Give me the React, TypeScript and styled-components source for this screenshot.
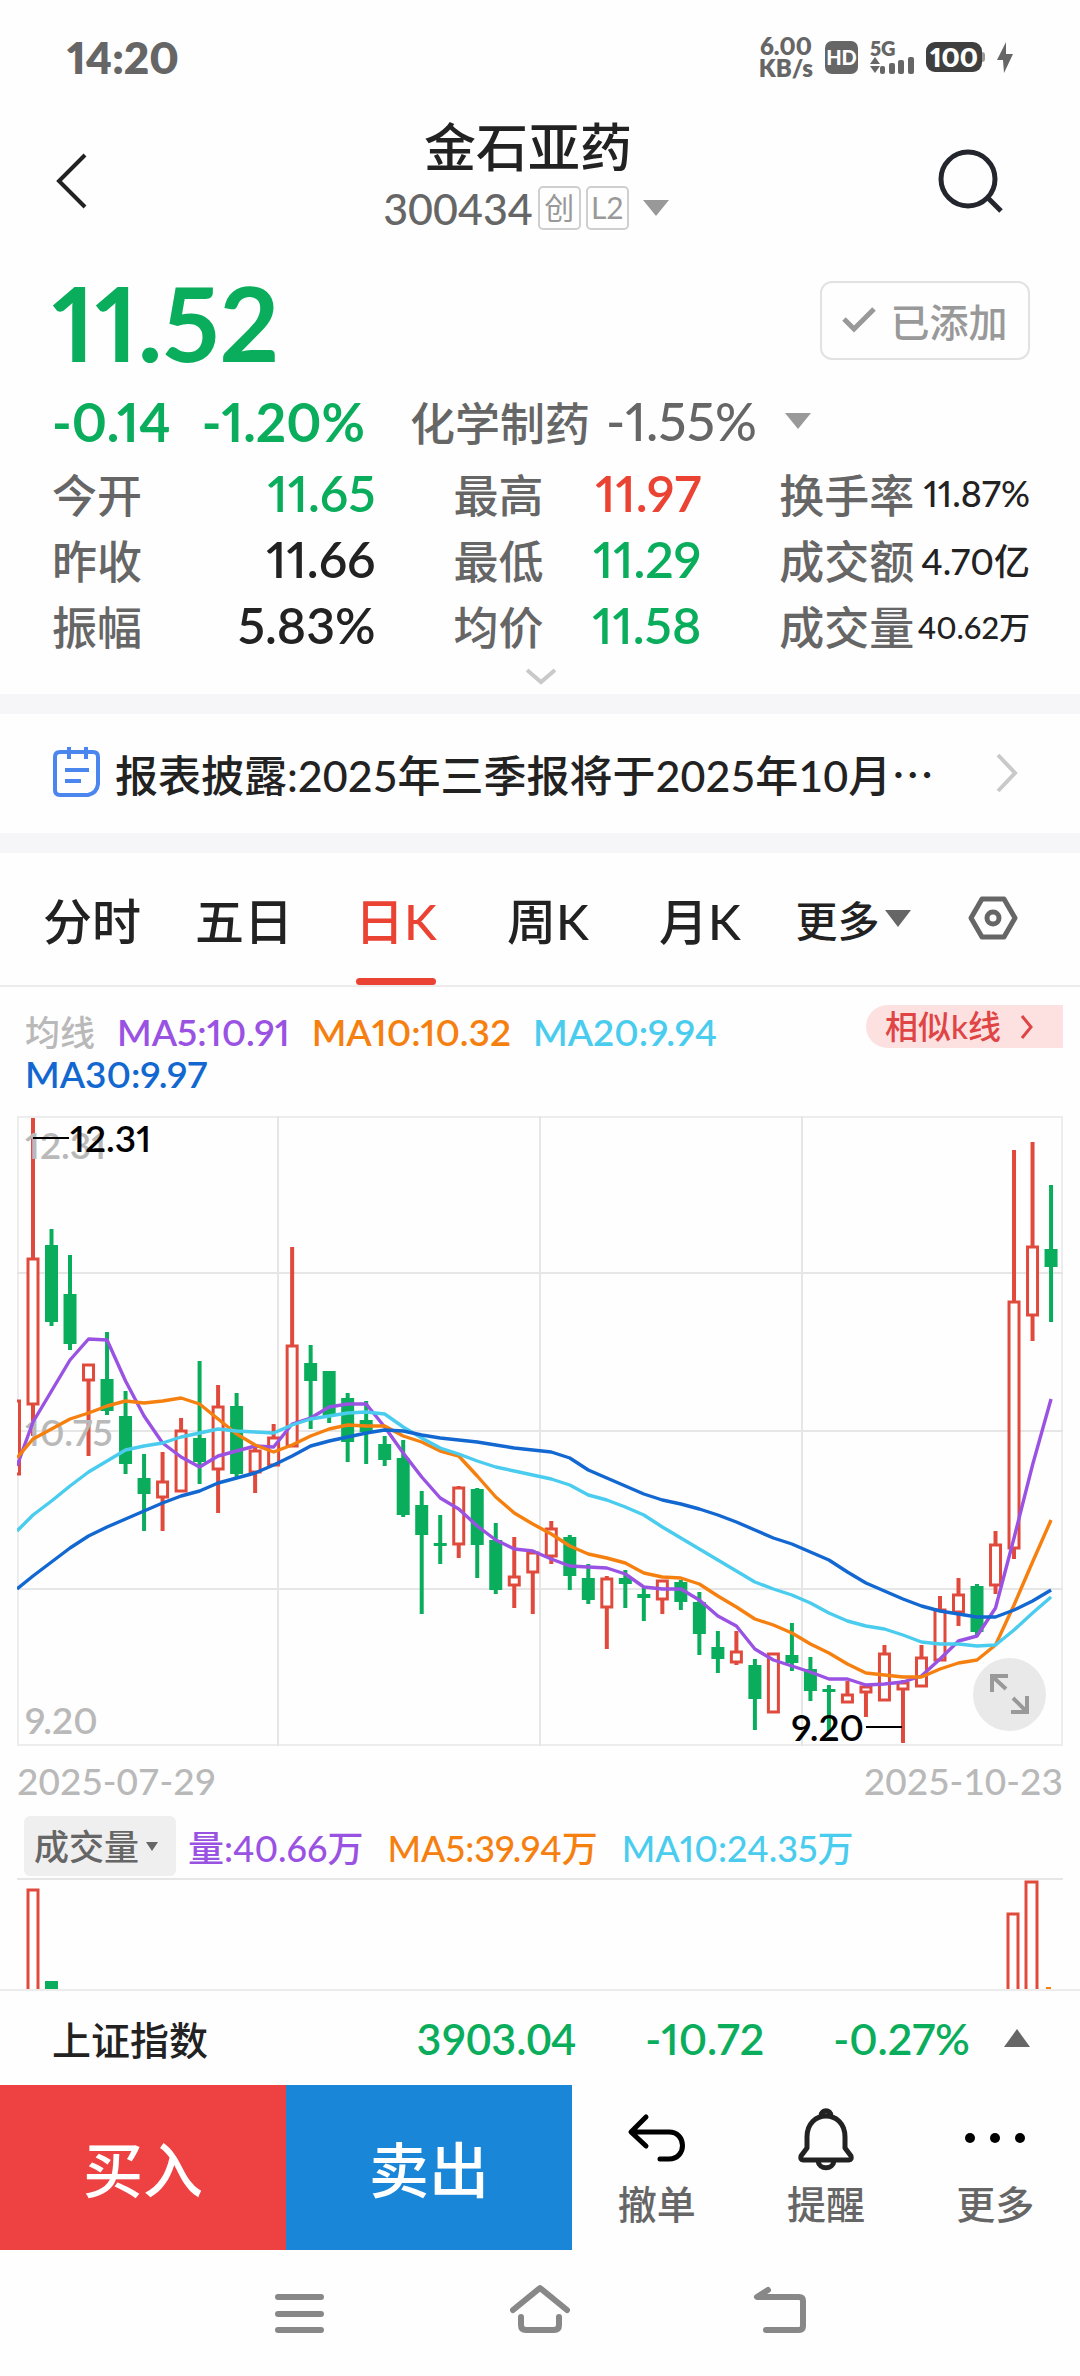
import React from 'react';
import styled, { createGlobalStyle } from 'styled-components';

const color = {
  up: '#eb4333',
  down: '#0aad5c',
  ink: '#222222',
  soft: '#666666',
  mute: '#999999',
  faint: '#b9b9b9',
  line: '#ececec',
  band: '#f6f6f8',
  ma5: '#9a52e3',
  ma10: '#f5800f',
  ma20: '#4accee',
  ma30: '#1268d0',
};

const GlobalStyle = createGlobalStyle`
  * { box-sizing: border-box; }
  body {
    margin: 0;
    background: #fefefe;
    color: ${color.ink};
    font-family: Lato, "Noto Sans CJK SC", sans-serif;
    font-weight: 500;
    font-variant-numeric: proportional-nums;
  }
  button, select { font: inherit; font-variant-numeric: inherit; color: inherit; background: none; border: 0; padding: 0; margin: 0; cursor: pointer; }
  h1, h2, p, dl, dd, dt { margin: 0; font-weight: inherit; }
  svg { display: block; flex: none; }
`;

/* ---------- status bar ---------- */
const StatusBar = styled.header`
  display: flex;
  align-items: center;
  justify-content: space-between;
  height: 112px;
  padding: 2px 67px 0;
  color: ${color.soft};
  font-weight: 800;
`;
const Clock = styled.time`
  font-size: 44px;
`;
const StatusIcons = styled.div`
  display: flex;
  align-items: center;
  gap: 12px;
`;
const NetSpeed = styled.div`
  font-size: 24px;
  line-height: 22px;
  text-align: center;
`;
const HdBadge = styled.span`
  width: 33px;
  border-radius: 7px;
  background: ${color.soft};
  color: #fff;
  font-size: 20px;
  font-weight: 900;
  line-height: 33px;
  text-align: center;
`;
const Signal = styled.div`
  font-size: 20px;
  line-height: 16px;
`;
const Battery = styled.div`
  display: flex;
  align-items: center;
  &::after {
    content: '';
    width: 3px;
    height: 10px;
    border-radius: 0 3px 3px 0;
    background: ${color.mute};
  }
`;
const BatteryLevel = styled.span`
  width: 56px;
  border-radius: 9px;
  background: #3f3f3f;
  color: #fff;
  font-size: 27px;
  line-height: 30px;
  text-align: center;
`;

/* ---------- title ---------- */
const TitleBar = styled.div`
  display: flex;
  height: 138px;
`;
const BarButton = styled.button<{ $width: number }>`
  display: flex;
  align-items: center;
  width: ${p => p.$width}px;
  height: 138px;
`;
const TitleBlock = styled.div`
  flex: 1;
  text-align: center;
`;
const StockName = styled.h1`
  font-size: 52px;
  line-height: 70px;
`;
const CodeButton = styled.button`
  display: inline-flex;
  align-items: center;
  height: 52px;
  padding-right: 4px;
  color: ${color.soft};
  font-size: 43px;
  font-variant-numeric: tabular-nums;
`;
const Tag = styled.span`
  min-width: 43px;
  height: 44px;
  margin-left: 5px;
  border: 2px solid #cfcfcf;
  border-radius: 5px;
  color: ${color.mute};
  font-size: 30px;
  font-weight: 400;
  line-height: 38px;
  text-align: center;
`;

/* ---------- quote ---------- */
const Quote = styled.section`
  padding: 22px 50px 0 52px;
`;
const PriceRow = styled.div`
  display: flex;
  align-items: center;
  justify-content: space-between;
  height: 100px;
`;
const Price = styled.p`
  color: ${color.down};
  font-size: 104px;
  font-weight: 700;
  line-height: 100px;
`;
const AddedButton = styled.button`
  display: flex;
  align-items: center;
  justify-content: center;
  gap: 14px;
  width: 210px;
  height: 79px;
  margin-bottom: 4px;
  border: 2px solid #e2e2e2;
  border-radius: 12px;
  color: ${color.mute};
  font-size: 39px;
`;
const ChangeRow = styled.div`
  display: flex;
  align-items: center;
  height: 66px;
  margin: 16px 0 6px;
  font-size: 53px;
`;
const Change = styled.span`
  margin-right: 31px;
  color: ${color.down};
  font-weight: 700;
`;
const SectorButton = styled.button`
  display: flex;
  align-items: center;
  gap: 16px;
  margin-left: 14px;
  color: ${color.soft};
  font-size: 45px;
`;
const SectorChange = styled.span`
  margin-right: 12px;
  font-size: 52px;
`;
const Stats = styled.dl`
  display: grid;
  grid-template-columns: 324fr 248fr 251fr;
  column-gap: 78px;
`;
const Stat = styled.div`
  display: flex;
  align-items: center;
  justify-content: space-between;
  height: 66px;
  white-space: nowrap;
`;
const StatLabel = styled.dt`
  color: ${color.soft};
  font-size: 45px;
`;
const StatValue = styled.dd<{ $tone: string; $size: number }>`
  color: ${p => p.$tone};
  font-size: ${p => p.$size}px;
  font-weight: ${p => (p.$size > 40 ? 600 : 500)};
`;
const ExpandButton = styled.button`
  display: flex;
  justify-content: center;
  width: 100%;
  height: 36px;
  padding-top: 10px;
`;

/* ---------- news ---------- */
const Band = styled.div`
  height: 20px;
  background: ${color.band};
`;
const News = styled.a`
  display: flex;
  align-items: center;
  height: 119px;
  padding: 0 62px 2px 53px;
  color: inherit;
  font-size: 43px;
  text-decoration: none;
`;
const NewsText = styled.span`
  flex: 1;
  min-width: 0;
  padding-left: 14px;
  overflow: hidden;
  white-space: nowrap;
  font-variant-numeric: tabular-nums;
`;

/* ---------- tabs ---------- */
const Tabs = styled.nav`
  display: grid;
  grid-template-columns: repeat(5, 152fr) 154fr 126fr;
  height: 134px;
  padding: 0 24px 0 16px;
  border-bottom: 2px solid ${color.line};
`;
const Tab = styled.button<{ $active?: boolean }>`
  display: flex;
  align-items: center;
  justify-content: center;
  position: relative;
  padding-bottom: 2px;
  color: ${p => (p.$active ? color.up : color.ink)};
  font-size: 49px;
  &::after {
    content: '';
    display: ${p => (p.$active ? 'block' : 'none')};
    position: absolute;
    bottom: 0;
    left: 50%;
    width: 80px;
    height: 7px;
    margin-left: -40px;
    border-radius: 4px;
    background: ${color.up};
  }
`;
const MoreTab = styled(Tab)`
  gap: 5px;
  font-size: 42px;
`;

/* ---------- chart ---------- */
const LegendRow = styled.div`
  display: flex;
  align-items: flex-start;
  padding: 18px 17px 21px 25px;
`;
const Legend = styled.div`
  display: flex;
  flex: 1;
  flex-wrap: wrap;
  column-gap: 22px;
  padding-top: 6px;
  font-size: 37px;
  line-height: 42px;
`;
const LegendItem = styled.span<{ $tone: string }>`
  color: ${p => p.$tone};
`;
const AverageItem = styled(LegendItem)`
  font-weight: 600;
`;
const LegendTitle = styled(LegendItem)`
  font-size: 35px;
`;
const SimilarButton = styled.button`
  display: flex;
  align-items: center;
  gap: 20px;
  height: 43px;
  padding: 0 30px 0 19px;
  border-radius: 22px 0 0 22px;
  background: #fde1e1;
  color: #e04545;
  font-size: 33px;
  line-height: 43px;
`;
const ChartBox = styled.div`
  position: relative;
  margin: 0 17px;
  & > svg { width: 100%; height: auto; }
`;
const FullScreen = styled.button`
  position: absolute;
  right: 17px;
  bottom: 15px;
  width: 73px;
  height: 73px;
  border-radius: 50%;
  background: rgba(228, 228, 228, 0.8);
`;
const DateRow = styled.div`
  display: flex;
  justify-content: space-between;
  padding: 0 17px;
  color: ${color.faint};
  font-size: 37px;
  font-variant-numeric: tabular-nums;
  line-height: 70px;
`;
const VolumeRow = styled.div`
  display: flex;
  align-items: center;
  column-gap: 24px;
  height: 62px;
  padding: 0 0 2px 24px;
  font-size: 36px;
`;
const PickerBox = styled.label`
  display: flex;
  align-items: center;
  width: 152px;
  height: 60px;
  padding-left: 10px;
  margin-right: -12px;
  border-radius: 6px;
  background: #efefef;
  color: ${color.soft};
  font-size: 35px;
`;
const Picker = styled.select`
  width: 112px;
  height: 60px;
  appearance: none;
  outline: none;
`;

/* ---------- index strip ---------- */
const IndexStrip = styled.section`
  display: flex;
  align-items: center;
  height: 96px;
  padding: 0 50px 0 52px;
  border-top: 2px solid ${color.line};
  color: ${color.down};
  font-size: 43px;
`;
const IndexName = styled.h2`
  flex: 1;
  color: ${color.ink};
  font-size: 39px;
`;
const IndexValue = styled.span<{ $tabular?: boolean }>`
  margin-left: 69px;
  font-weight: 600;
  font-variant-numeric: ${p => (p.$tabular ? 'tabular-nums' : 'inherit')};
`;
const IndexToggle = styled.button`
  margin-left: 34px;
`;

/* ---------- trade bar ---------- */
const TradeBar = styled.div`
  display: grid;
  grid-template-columns: 286fr 286fr 508fr;
  height: 165px;
`;
const TradeButton = styled.button<{ $bg: string }>`
  padding-bottom: 3px;
  background: ${p => p.$bg};
  color: #fff;
  font-size: 60px;
`;
const Tools = styled.div`
  display: grid;
  grid-template-columns: repeat(3, 1fr);
`;
const Tool = styled.button`
  display: flex;
  flex-direction: column;
  align-items: center;
  padding-top: 23px;
  color: ${color.soft};
  font-size: 39px;
  line-height: 64px;
`;
const SystemNav = styled.nav`
  display: flex;
  justify-content: center;
  gap: 178px;
  height: 126px;
`;
const NavButton = styled.button`
  width: 62px;
  height: 116px;
`;

/* ---------- glyphs ---------- */
type TriangleProps = { width: number; height: number; fill: string; up?: boolean };
const Triangle = ({ width, height, fill, up }: TriangleProps) => (
  <svg width={width} height={height} viewBox="0 0 10 10" preserveAspectRatio="none">
    <path d={up ? 'M5 0L10 10H0Z' : 'M0 0H10L5 10Z'} fill={fill} />
  </svg>
);
type ChevronProps = { width: number; height: number; stroke: string; weight: number; points: string };
const Chevron = ({ width, height, stroke, weight, points }: ChevronProps) => (
  <svg width={width} height={height} viewBox={`0 0 ${width} ${height}`}>
    <polyline points={points} fill="none" stroke={stroke} strokeWidth={weight} />
  </svg>
);

/* ---------- chart data (plot units, 1046 x 630) ---------- */
type Candle = [up: 0 | 1, top: number, bottom: number, high: number, low: number];
const candles: Candle[] = [
  [1, 284, 359, 284, 359], [1, 142, 289, 2, 320], [0, 129, 206, 113, 210], [0, 178, 228, 139, 234],
  [1, 248, 265, 248, 340], [0, 263, 295, 216, 299], [0, 300, 348, 275, 358], [0, 362, 378, 338, 415],
  [1, 365, 382, 336, 415], [1, 314, 376, 302, 376], [0, 322, 346, 245, 368], [1, 290, 354, 269, 397],
  [0, 290, 358, 277, 362], [1, 334, 357, 330, 377], [1, 321, 350, 308, 350], [1, 229, 331, 131, 331],
  [0, 247, 265, 229, 313], [0, 255, 300, 255, 307], [0, 282, 326, 277, 346], [0, 304, 316, 285, 348],
  [0, 328, 344, 320, 350], [0, 342, 399, 324, 401], [0, 389, 419, 375, 498], [0, 427, 430, 399, 448],
  [1, 371, 429, 370, 442], [0, 373, 429, 372, 462], [0, 424, 474, 407, 478], [1, 460, 470, 421, 492],
  [1, 436, 457, 434, 498], [1, 412, 441, 405, 448], [0, 421, 460, 419, 474], [0, 462, 484, 448, 488],
  [1, 462, 492, 460, 533], [0, 462, 468, 454, 492], [0, 478, 482, 472, 505], [1, 464, 484, 464, 498],
  [0, 466, 486, 464, 494], [0, 486, 518, 476, 539], [0, 531, 543, 515, 557], [1, 535, 547, 515, 549],
  [0, 549, 583, 543, 614], [1, 537, 597, 537, 597], [0, 539, 547, 507, 555], [0, 553, 575, 541, 585],
  [0, 573, 576, 569, 617], [1, 578, 587, 565, 587], [1, 570, 577, 570, 601], [1, 537, 585, 529, 585],
  [1, 566, 574, 564, 627], [1, 541, 571, 529, 571], [1, 493, 545, 480, 545], [1, 478, 497, 462, 510],
  [0, 470, 516, 468, 519], [1, 428, 470, 415, 478], [1, 185, 433, 34, 443], [1, 130, 200, 26, 225],
  [0, 133, 151, 69, 206],
];
const averages: { tone: string; values: number[] }[] = [
  { tone: color.ma5, values: [350, 306, 275, 244, 223, 224, 265, 300, 327, 341, 351, 340, 335, 330, 331, 308, 302, 291, 288, 288, 311, 337, 361, 382, 393, 410, 424, 433, 435, 443, 450, 451, 452, 458, 471, 473, 473, 484, 500, 510, 533, 544, 550, 556, 563, 563, 569, 568, 566, 560, 543, 525, 520, 492, 422, 349, 283] },
  { tone: color.ma10, values: [342, 323, 313, 303, 297, 290, 285, 287, 285, 282, 288, 303, 318, 329, 336, 329, 320, 313, 309, 310, 310, 320, 326, 335, 340, 360, 381, 397, 408, 418, 430, 438, 442, 447, 457, 461, 462, 468, 480, 491, 503, 509, 517, 528, 537, 548, 557, 559, 561, 561, 553, 547, 544, 529, 489, 446, 404] },
  { tone: color.ma20, values: [415, 399, 385, 370, 356, 345, 334, 330, 327, 321, 317, 313, 315, 316, 317, 309, 303, 300, 297, 296, 298, 311, 322, 332, 338, 345, 351, 355, 359, 363, 369, 379, 384, 391, 399, 411, 422, 433, 444, 455, 466, 473, 479, 487, 497, 505, 510, 513, 519, 526, 528, 528, 530, 529, 514, 497, 481] },
  { tone: color.ma30, values: [473, 460, 446, 432, 420, 411, 403, 395, 387, 380, 375, 367, 362, 357, 349, 340, 330, 325, 321, 317, 314, 315, 319, 322, 324, 326, 329, 332, 334, 336, 342, 354, 362, 370, 378, 384, 388, 393, 399, 406, 414, 422, 428, 436, 444, 456, 467, 475, 483, 490, 495, 498, 501, 501, 494, 485, 474] },
];
const slot = (i: number) => 16 + (i - 1) * 18.51;

const CandleChart = () => (
  <svg viewBox="0 0 1046 630" role="img" aria-label="日K线图">
    <defs><clipPath id="plot"><rect width="1046" height="630" /></clipPath></defs>
    <g stroke="#e6e6e6" strokeWidth="2" fill="none">
      <rect x="1" y="1" width="1044" height="628" stroke="#ededed" />
      <path d="M0 157H1046M0 315H1046M0 473H1046M261 0V630M523 0V630M785 0V630" />
    </g>
    <g clipPath="url(#plot)">
      {candles.map(([up, top, bottom, high, low], i) => {
        const x = slot(i);
        const tone = up ? '#e04a3c' : color.down;
        return (
          <g key={i} stroke={tone}>
            {high < top && <path d={`M${x} ${high}V${top}`} strokeWidth="4" />}
            {low > bottom && <path d={`M${x} ${bottom}V${low}`} strokeWidth="4" />}
            {up
              ? <rect x={x - 5} y={top + 1} width="10" height={Math.max(bottom - top - 2, 2)} fill="#fefefe" strokeWidth="3" />
              : <rect x={x - 6.5} y={top} width="13" height={bottom - top} fill={tone} stroke="none" />}
          </g>
        );
      })}
    </g>
    <g fill={color.faint} fontSize="37" fontWeight="600">
      <text x="8" y="43">12.31</text>
      <text x="8" y="330">10.75</text>
      <text x="8" y="618">9.20</text>
    </g>
    <g clipPath="url(#plot)" fill="none" strokeWidth="3.4" strokeLinejoin="round">
      {averages.map(({ tone, values }) => (
        <polyline key={tone} stroke={tone} points={values.map((v, i) => `${i ? slot(i) : 0},${v}`).join(' ')} />
      ))}
    </g>
    <path d="M16 22H52M849 611H885" stroke="#000" strokeWidth="2" />
    <g fill="#000" fontSize="37" fontWeight="600">
      <text x="53" y="36">12.31</text>
      <text x="847" y="625" textAnchor="end">9.20</text>
    </g>
  </svg>
);

const VolumeChart = () => (
  <svg viewBox="0 0 1046 111" role="img" aria-label="成交量图">
    <path d="M0 1H1046" stroke="#e6e6e6" strokeWidth="2" />
    <g fill="none" stroke="#e04a3c" strokeWidth="3">
      <path d="M11 111V12H21V111M991 111V36H1001V111M1009 111V4H1020V111" />
    </g>
    <path d="M28 103H41V111H28Z" fill={color.down} />
    <path d="M1029 109H1034V111H1029Z" fill={color.ma10} />
  </svg>
);

const stats = [
  { label: '今开', value: '11.65', tone: color.down, size: 50 },
  { label: '最高', value: '11.97', tone: color.up, size: 50 },
  { label: '换手率', value: '11.87%', tone: color.ink, size: 36 },
  { label: '昨收', value: '11.66', tone: color.ink, size: 50 },
  { label: '最低', value: '11.29', tone: color.down, size: 50 },
  { label: '成交额', value: '4.70亿', tone: color.ink, size: 36 },
  { label: '振幅', value: '5.83%', tone: color.ink, size: 50 },
  { label: '均价', value: '11.58', tone: color.down, size: 50 },
  { label: '成交量', value: '40.62万', tone: color.ink, size: 31 },
];
const periods = ['分时', '五日', '日K', '周K', '月K'];

export default function App() {
  return (
    <>
      <GlobalStyle />
      <StatusBar>
        <Clock>14:20</Clock>
        <StatusIcons>
          <NetSpeed>6.00<br />KB/s</NetSpeed>
          <HdBadge>HD</HdBadge>
          <Signal>
            5G
            <svg width="44" height="18" viewBox="0 0 44 18" fill={color.soft}>
              <path d="M0 8L5 1L10 8ZM0 10H10L5 17Z" />
              <rect x="10" y="10" width="5" height="8" rx="2" />
              <rect x="19" y="7" width="6" height="11" rx="2" />
              <rect x="28" y="4" width="6" height="14" rx="2" />
              <rect x="38" y="1" width="6" height="17" rx="2" />
            </svg>
          </Signal>
          <Battery><BatteryLevel>100</BatteryLevel></Battery>
          <svg width="16" height="31" viewBox="0 0 16 31"><path d="M9 0L0 18H6L7 31L16 12H9Z" fill={color.soft} /></svg>
        </StatusIcons>
      </StatusBar>

      <TitleBar>
        <BarButton $width={120} aria-label="返回">
          <svg width="120" height="60" viewBox="0 0 120 60"><path d="M85 4L59 30L85 56" fill="none" stroke={color.ink} strokeWidth="4" /></svg>
        </BarButton>
        <TitleBlock>
          <StockName>金石亚药</StockName>
          <CodeButton>
            300434<Tag>创</Tag><Tag>L2</Tag>
            <svg width="40" height="16" viewBox="0 0 40 16"><path d="M14 0H40L27 16Z" fill={color.mute} /></svg>
          </CodeButton>
        </TitleBlock>
        <BarButton $width={144} aria-label="搜索">
          <svg width="80" height="80" viewBox="0 0 80 80" fill="none" stroke="#24262e" strokeWidth="5">
            <circle cx="32" cy="38" r="27" /><path d="M52 57L65 70" />
          </svg>
        </BarButton>
      </TitleBar>

      <Quote>
        <PriceRow>
          <Price>11.52</Price>
          <AddedButton>
            <Chevron width={34} height={26} stroke={color.mute} weight={5} points="2,12 12,22 32,2" />
            已添加
          </AddedButton>
        </PriceRow>
        <ChangeRow>
          <Change>-0.14</Change>
          <Change>-1.20%</Change>
          <SectorButton>
            化学制药<SectorChange>-1.55%</SectorChange>
            <Triangle width={26} height={16} fill={color.mute} />
          </SectorButton>
        </ChangeRow>
        <Stats>
          {stats.map(s => (
            <Stat key={s.label}>
              <StatLabel>{s.label}</StatLabel>
              <StatValue $tone={s.tone} $size={s.size}>{s.value}</StatValue>
            </Stat>
          ))}
        </Stats>
        <ExpandButton aria-label="展开">
          <Chevron width={30} height={17} stroke="#c9c9c9" weight={4} points="1,2 15,14 29,2" />
        </ExpandButton>
      </Quote>

      <Band />
      <News href="#news">
        <svg width="48" height="52" viewBox="0 0 48 52" fill="none" stroke="#4b86ee" strokeWidth="4">
          <path d="M7 5H40Q45 5 45 10V37Q44 46 35 48H7Q2 48 2 43V10Q2 5 7 5ZM16 0V12M33 0V12M12 23H36M12 34H28" />
        </svg>
        <NewsText>报表披露:2025年三季报将于2025年10月⋯</NewsText>
        <Chevron width={22} height={40} stroke="#c9c9c9" weight={4} points="2,2 19,20 2,38" />
      </News>
      <Band />

      <Tabs>
        {periods.map(p => <Tab key={p} $active={p === '日K'}>{p}</Tab>)}
        <MoreTab>更多<Triangle width={26} height={17} fill={color.soft} /></MoreTab>
        <Tab aria-label="设置">
          <svg width="50" height="44" viewBox="0 0 50 44" fill="none" stroke={color.soft} strokeWidth="5">
            <path d="M14 3H36L47 22L36 41H14L3 22Z" strokeLinejoin="round" /><circle cx="25" cy="22" r="6" />
          </svg>
        </Tab>
      </Tabs>

      <LegendRow>
        <Legend>
          <LegendTitle $tone={color.faint}>均线</LegendTitle>
          <AverageItem $tone={color.ma5}>MA5:10.91</AverageItem>
          <AverageItem $tone={color.ma10}>MA10:10.32</AverageItem>
          <AverageItem $tone={color.ma20}>MA20:9.94</AverageItem>
          <AverageItem $tone={color.ma30}>MA30:9.97</AverageItem>
        </Legend>
        <SimilarButton>
          相似k线
          <Chevron width={12} height={24} stroke="#e04545" weight={3} points="1,1 10,12 1,23" />
        </SimilarButton>
      </LegendRow>
      <ChartBox>
        <CandleChart />
        <FullScreen aria-label="全屏">
          <svg width="73" height="73" viewBox="0 0 73 73" fill="none" stroke={color.mute} strokeWidth="4">
            <path d="M19 34V18H35M20 19L33 31M38 54H54V38M53 53L40 40" />
          </svg>
        </FullScreen>
      </ChartBox>
      <DateRow><time>2025-07-29</time><time>2025-10-23</time></DateRow>
      <VolumeRow>
        <PickerBox>
          <Picker aria-label="指标" defaultValue="vol"><option value="vol">成交量</option></Picker>
          <Triangle width={12} height={9} fill={color.soft} />
        </PickerBox>
        <LegendItem $tone={color.ma5}>量:40.66万</LegendItem>
        <LegendItem $tone={color.ma10}>MA5:39.94万</LegendItem>
        <LegendItem $tone={color.ma20}>MA10:24.35万</LegendItem>
      </VolumeRow>
      <ChartBox><VolumeChart /></ChartBox>

      <IndexStrip>
        <IndexName>上证指数</IndexName>
        <IndexValue $tabular>3903.04</IndexValue>
        <IndexValue>-10.72</IndexValue>
        <IndexValue>-0.27%</IndexValue>
        <IndexToggle aria-label="展开指数"><Triangle width={26} height={18} fill={color.soft} up /></IndexToggle>
      </IndexStrip>

      <TradeBar>
        <TradeButton $bg="#ee4242">买入</TradeButton>
        <TradeButton $bg="#1986d7">卖出</TradeButton>
        <Tools>
          <Tool>
            <svg width="60" height="64" viewBox="0 0 60 64" fill="none" stroke="#000" strokeWidth="5" strokeLinecap="round" strokeLinejoin="round">
              <path d="M19 9L4 24L19 38M5 24H42C60 24 60 51 42 51H33" />
            </svg>
            撤单
          </Tool>
          <Tool>
            <svg width="60" height="64" viewBox="0 0 60 64" fill="none" stroke="#222" strokeWidth="5" strokeLinejoin="round">
              <path d="M11 40V29C11 1 49 1 49 29V40L55 48Q56 52 53 52H7Q4 52 5 48ZM25 8C25 1 35 1 35 8M22 53C23 62 37 62 38 53" />
            </svg>
            提醒
          </Tool>
          <Tool>
            <svg width="60" height="64" viewBox="0 0 60 64">
              <circle cx="5" cy="30" r="5" /><circle cx="30" cy="30" r="5" /><circle cx="55" cy="30" r="5" />
            </svg>
            更多
          </Tool>
        </Tools>
      </TradeBar>

      <SystemNav>
        <NavButton aria-label="最近任务">
          <svg width="62" height="116" viewBox="0 2 62 116" stroke="#888" strokeWidth="6" strokeLinecap="round"><path d="M9 49H52M9 66H52M9 82H52" /></svg>
        </NavButton>
        <NavButton aria-label="主屏幕">
          <svg width="62" height="116" viewBox="0 2 62 116" fill="none" stroke="#888" strokeWidth="6" strokeLinecap="round" strokeLinejoin="round">
            <path d="M4 62L31 40L58 62M12 69V77Q12 82 17 82H45Q50 82 50 77V69" />
          </svg>
        </NavButton>
        <NavButton aria-label="返回上一级">
          <svg width="62" height="116" viewBox="0 2 62 116" fill="none" stroke="#888" strokeWidth="6" strokeLinecap="round" strokeLinejoin="round">
            <path d="M19 42L8 49H50Q54 49 54 53V78Q54 82 50 82H17" />
          </svg>
        </NavButton>
      </SystemNav>
    </>
  );
}
